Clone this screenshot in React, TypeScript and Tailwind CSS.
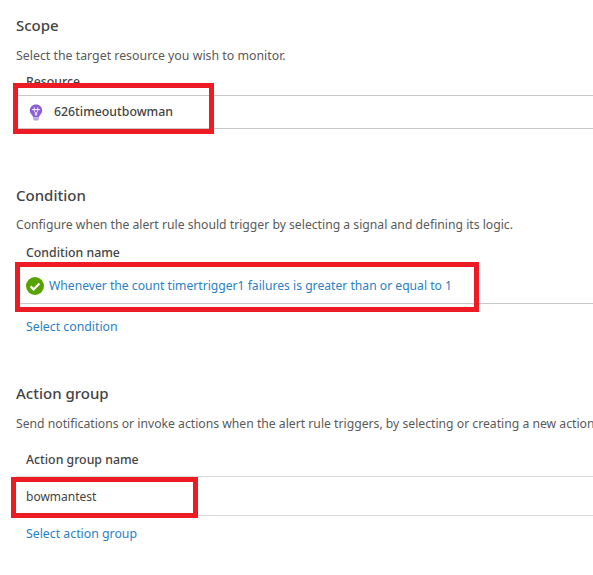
const font = "[font-family:'Noto_Sans','Open_Sans',sans-serif]";

// purple lightbulb, app insights resource
function BulbIcon() {
  return (
    <svg width="14" height="17" viewBox="0 0 14 17" aria-hidden="true">
      <path d="M7 0.5C3.4 0.5 0.8 3.2 0.8 6.4c0 2.4 1.5 3.7 2.5 5.2.5.8.7 1.2.8 1.9h5.8c.1-.7.3-1.1.8-1.9 1-1.5 2.5-2.8 2.5-5.2C13.2 3.2 10.6.5 7 .5z" fill="#8a5fd8" />
      <path d="M4.2 13.9h5.6v1.3c0 .8-.8 1.3-1.5 1.3H5.7c-.7 0-1.5-.5-1.5-1.3z" fill="#b9a6de" />
      <path d="M3.4 5.6h7.2M5.3 3.8v2.6c0 1 .4 1.5 1 1.7v3M8.7 3.8v2.6c0 1-.4 1.5-1 1.7v3" fill="none" stroke="#ffffff" strokeWidth="0.9" strokeLinecap="round" />
    </svg>
  );
}

function CheckIcon() {
  return (
    <svg width="18" height="18" viewBox="0 0 18 18" aria-hidden="true">
      <circle cx="9" cy="9" r="9" fill="#57a300" />
      <path d="M4.6 9.4l3 3 5.8-6" fill="none" stroke="#ffffff" strokeWidth="2.2" />
    </svg>
  );
}

function Section({ title, desc, className, descClass, children }: {
  title: string;
  desc: string;
  className?: string;
  descClass?: string;
  children: React.ReactNode;
}) {
  return (
    <section className={className}>
      <h2 className="text-[15px] leading-5 font-medium text-[#444444]">{title}</h2>
      <p className={`leading-5 whitespace-nowrap text-[#5a5a5a] ${descClass}`}>{desc}</p>
      {children}
    </section>
  );
}

export default function App() {
  return (
    <div className={`relative h-[575px] w-[593px] overflow-hidden bg-white pl-4 ${font}`}>
      <Section title="Scope" desc="Select the target resource you wish to monitor." className="pt-[15px]" descClass="mt-[11px] text-[12.35px]">
        <div className="mt-[8px] pl-[10px] text-[12.3px] leading-4 font-medium text-[#444444]">Resource</div>
        <div className="mt-[5px] flex h-[34px] items-center gap-[11px] border-y border-[#c8c8c8] pl-[13px] text-[12.3px] font-medium text-[#444444]">
          <BulbIcon />
          <span>626timeoutbowman</span>
        </div>
      </Section>

      <Section title="Condition" desc="Configure when the alert rule should trigger by selecting a signal and defining its logic." className="pt-[56px]" descClass="mt-[10px] text-[12.2px]">
        <div className="mt-[9px] h-[22px] pl-[10px] text-[12.3px] leading-[18px] font-medium text-[#444444]">Condition name</div>
        <div className="flex h-[38px] items-center gap-[5px] border-b border-[#c8c8c8] pt-[3px] pl-[10px] text-[12.15px] text-[#2a7fc4]">
          <CheckIcon />
          <span>Whenever the count timertrigger1 failures is greater than or equal to 1</span>
        </div>
        <div className="mt-[15px] pl-[10px] text-[12.3px] leading-4 text-[#2a7fc4]">Select condition</div>
      </Section>

      <Section title="Action group" desc="Send notifications or invoke actions when the alert rule triggers, by selecting or creating a new action" className="pt-[48px]" descClass="mt-[11px] text-[12.2px]">
        <div className="mt-[18px] pl-[10px] text-[12.3px] leading-4 font-medium text-[#444444]">Action group name</div>
        <div className="mt-[8px] flex h-[40px] items-center border-y border-[#dcdcdc] pt-[2px] pl-[10px] text-[12px] text-[#444444]">bowmantest</div>
        <div className="mt-[10px] pl-[10px] text-[12.3px] leading-4 text-[#2a7fc4]">Select action group</div>
      </Section>

      {/* red annotation boxes drawn over the form */}
      <div className="absolute top-[83px] left-[13px] h-[51px] w-[201px] border-[5px] border-[#ed1c24]" />
      <div className="absolute top-[262px] left-[15px] h-[50px] w-[464px] border-[5px] border-[#ed1c24]" />
      <div className="absolute top-[477px] left-[11px] h-[41px] w-[187px] border-[5px] border-[#ed1c24]" />
    </div>
  );
}
